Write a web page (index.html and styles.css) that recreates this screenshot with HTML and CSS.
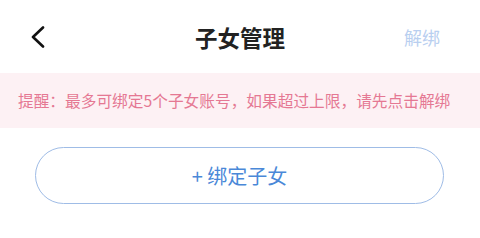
FILE: index.html
```html
<!DOCTYPE html>
<html lang="zh-CN">
<head>
    <meta charset="UTF-8">
    <meta name="viewport" content="width=device-width, initial-scale=1.0">
    <title>子女管理</title>
    <link rel="stylesheet" href="styles.css">
</head>
<body>
    <header class="nav-bar">
        <a class="back-btn" href="#">
            <svg width="16" height="22" viewBox="0 0 16 22">
                <path d="M13 1.5 L3 11 L13 20.5" fill="none" stroke="#111" stroke-width="2.6" stroke-linecap="round" stroke-linejoin="round"/>
            </svg>
        </a>
        <h1 class="nav-title">子女管理</h1>
        <span class="nav-action">解绑</span>
    </header>

    <div class="tip-bar">提醒：最多可绑定5个子女账号，如果超过上限，请先点击解绑</div>

    <div class="bind-wrap">
        <button class="bind-btn">+ 绑定子女</button>
    </div>
</body>
</html>
```

FILE: styles.css
```css
body {
    margin: 0;
    padding: 0;
    background-color: #fff;
    font-family: "Noto Sans CJK SC", "Noto Sans", sans-serif;
}

.nav-bar {
    display: grid;
    grid-template-columns: 1fr auto 1fr;
    align-items: center;
    height: 73px;
    padding: 0 40px;
}

.back-btn {
    display: flex;
    margin-left: -10px;
}

.nav-title {
    margin: 0;
    font-size: 22.5px;
    font-weight: bold;
    color: #222;
}

.nav-action {
    text-align: right;
    font-size: 18px;
    color: #b9cff0;
}

.tip-bar {
    height: 55px;
    line-height: 55px;
    padding-left: 18px;
    background-color: #fdf1f4;
    color: #e57893;
    font-size: 15.7px;
    white-space: nowrap;
}

.bind-wrap {
    display: flex;
    padding: 19px 36px 0 35px;
}

.bind-btn {
    flex: 1;
    height: 57px;
    border: 1px solid #9fbce6;
    border-radius: 29px;
    background-color: #fff;
    color: #4a88d8;
    font-family: inherit;
    font-size: 20px;
    cursor: pointer;
}
```
